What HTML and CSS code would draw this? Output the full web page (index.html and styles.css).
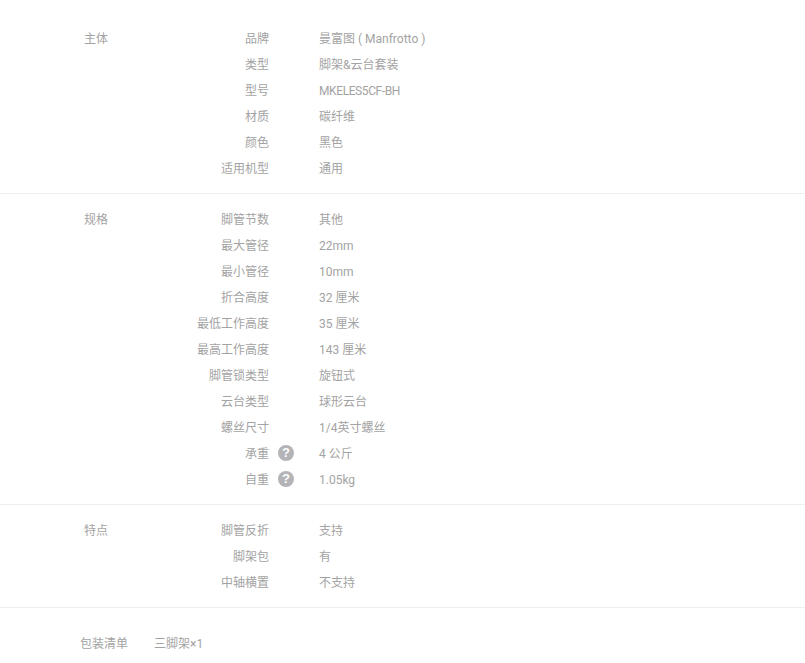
FILE: index.html
```html
<!DOCTYPE html>
<html lang="zh-CN">
<head>
<meta charset="utf-8">
<title>规格参数</title>
<link rel="stylesheet" href="styles.css">
</head>
<body>
<section class="group">
  <h3 class="group-name">主体</h3>
  <dl class="rows">
    <div class="row"><dt>品牌</dt><dd>曼富图 ( Manfrotto )</dd></div>
    <div class="row"><dt>类型</dt><dd>脚架&amp;云台套装</dd></div>
    <div class="row"><dt>型号</dt><dd class="model">MKELES5CF-BH</dd></div>
    <div class="row"><dt>材质</dt><dd>碳纤维</dd></div>
    <div class="row"><dt>颜色</dt><dd>黑色</dd></div>
    <div class="row"><dt>适用机型</dt><dd>通用</dd></div>
  </dl>
</section>
<section class="group">
  <h3 class="group-name">规格</h3>
  <dl class="rows">
    <div class="row"><dt>脚管节数</dt><dd>其他</dd></div>
    <div class="row"><dt>最大管径</dt><dd>22mm</dd></div>
    <div class="row"><dt>最小管径</dt><dd>10mm</dd></div>
    <div class="row"><dt>折合高度</dt><dd>32 厘米</dd></div>
    <div class="row"><dt>最低工作高度</dt><dd>35 厘米</dd></div>
    <div class="row"><dt>最高工作高度</dt><dd>143 厘米</dd></div>
    <div class="row"><dt>脚管锁类型</dt><dd>旋钮式</dd></div>
    <div class="row"><dt>云台类型</dt><dd>球形云台</dd></div>
    <div class="row"><dt>螺丝尺寸</dt><dd>1/4英寸螺丝</dd></div>
    <div class="row"><dt>承重<span class="help">?</span></dt><dd>4 公斤</dd></div>
    <div class="row"><dt>自重<span class="help">?</span></dt><dd>1.05kg</dd></div>
  </dl>
</section>
<section class="group">
  <h3 class="group-name">特点</h3>
  <dl class="rows">
    <div class="row"><dt>脚管反折</dt><dd>支持</dd></div>
    <div class="row"><dt>脚架包</dt><dd>有</dd></div>
    <div class="row"><dt>中轴横置</dt><dd>不支持</dd></div>
  </dl>
</section>
<footer class="package">
  <span class="package-label">包装清单</span>
  <span>三脚架×1</span>
</footer>
</body>
</html>
```
FILE: styles.css
```css
* { box-sizing: border-box; }
html, body { margin: 0; padding: 0; background: #fff; }
body {
  padding-top: 13px;
  font: 12px/28px Roboto, "Noto Sans CJK SC", sans-serif;
  color: #a3a3a3;
  overflow: hidden;
}
.group {
  display: flex;
  padding: 12px 0 12px 84px;
  border-bottom: 1px solid #eee;
}
.group-name {
  margin: 0;
  width: 60px;
  height: 26px;
  font: inherit;
}
.rows { margin: 0; }
.row { display: flex; height: 26px; }
dt {
  position: relative;
  width: 125px;
  text-align: right;
}
dd { margin: 0 0 0 50px; }
.model { letter-spacing: -0.4px; }
.help {
  position: absolute;
  left: 134px;
  top: 5px;
  width: 16px;
  height: 16px;
  border-radius: 50%;
  background: #b3b3b8;
  color: #fff;
  font: bold 13px/16px "Liberation Sans", sans-serif;
  text-align: center;
}
.package {
  display: flex;
  gap: 26px;
  padding: 22px 0 0 80px;
}
```
